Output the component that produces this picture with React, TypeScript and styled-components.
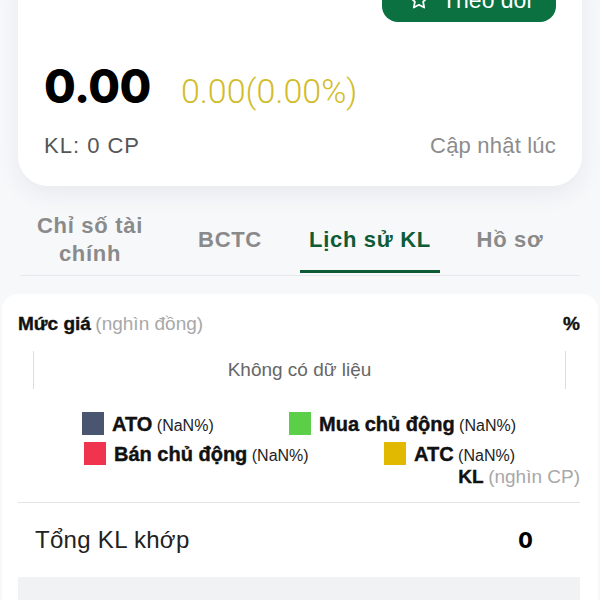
import styled, { createGlobalStyle } from 'styled-components'

const GlobalStyle = createGlobalStyle`
  html, body {
    margin: 0;
    padding: 0;
    background: #f7f8fa;
    font-family: "Liberation Sans", Arial, sans-serif;
    overflow: hidden;
  }
`;

const Page = styled.div`
  width: 600px;
  height: 600px;
  overflow: hidden;
`;

const QuoteCard = styled.section`
  margin: -30px 18px 0;
  padding: 8px 26px 29px;
  background: #fff;
  border-radius: 0 0 30px 30px;
  box-shadow: 0 8px 24px rgba(30, 40, 70, 0.07);
`;

const CardTop = styled.div`
  display: flex;
  justify-content: flex-end;
`;

const FollowButton = styled.button`
  display: flex;
  align-items: center;
  gap: 12px;
  width: 174px;
  height: 44px;
  padding: 0 0 0 26px;
  border: none;
  border-radius: 16px;
  background: #0b7141;
  color: #fff;
  font-family: "Liberation Sans", Arial, sans-serif;
  font-size: 23px;
`;

const PriceRow = styled.div`
  display: flex;
  align-items: baseline;
  gap: 30px;
  margin-top: 41px;
  line-height: 1;
`;

const Price = styled.span`
  font-family: Inter, sans-serif;
  font-weight: 800;
  font-size: 46px;
  letter-spacing: -0.5px;
  color: #000;
`;

const Change = styled.span`
  font-family: Roboto, sans-serif;
  font-size: 34px;
  font-weight: 300;
  color: #d2bc2c;
`;

const MetaRow = styled.div`
  display: flex;
  justify-content: space-between;
  margin-top: 26px;
  font-size: 22px;
  line-height: 1;
`;

const Meta = styled.span<{ $muted?: boolean }>`
  color: ${p => (p.$muted ? '#8c8c8c' : '#555')};
  letter-spacing: ${p => (p.$muted ? '0.2px' : '1px')};
`;

const Tabs = styled.nav`
  display: grid;
  grid-template-columns: repeat(4, 1fr);
  margin: 24px 20px 0;
  border-bottom: 1px solid #e6e7ea;
`;

const Tab = styled.div<{ $active?: boolean }>`
  display: flex;
  align-items: center;
  justify-content: center;
  height: 63px;
  box-sizing: border-box;
  text-align: center;
  font-size: 22px;
  font-weight: 700;
  letter-spacing: 0.7px;
  line-height: 28px;
  color: ${p => (p.$active ? '#0d5c36' : '#8a8a8a')};
  border-bottom: 3px solid ${p => (p.$active ? '#0d5c36' : 'transparent')};
  margin-bottom: 2px;
`;

const ChartCard = styled.section`
  margin: 18px 2px 0;
  padding: 18px 18px 0 16px;
  background: #fff;
  border-radius: 16px;
`;

const AxisRow = styled.div`
  display: flex;
  justify-content: space-between;
  align-items: baseline;
  line-height: 24px;
`;

const Strong = styled.b<{ $size?: number }>`
  font-weight: 700;
  font-size: ${p => p.$size ?? 19}px;
  color: #111;
  -webkit-text-stroke: 0.4px #111;
`;

const Unit = styled.span`
  font-size: 19px;
  color: #a8a8a8;
`;

const EmptyBox = styled.div`
  margin: 14px 14px 0 15px;
  height: 38px;
  display: flex;
  align-items: center;
  justify-content: center;
  border-left: 1px solid #dcdcdc;
  border-right: 1px solid #dcdcdc;
  font-size: 19px;
  color: #666;
`;

const Legend = styled.div`
  width: 434px;
  margin: 23px auto 0;
  display: flex;
  flex-direction: column;
  gap: 7px;
`;

const LegendRow = styled.div<{ $left?: number; $right?: number }>`
  display: flex;
  justify-content: space-between;
  padding: 0 ${p => p.$right ?? 0}px 0 ${p => p.$left ?? 0}px;
`;

const LegendItem = styled.div`
  display: flex;
  align-items: center;
  gap: 8px;
  height: 23px;
`;

const LegendLabel = styled.span`
  font-size: 16px;
  line-height: 1;
  white-space: nowrap;
  color: #222;
`;

const Swatch = styled.span<{ $color: string }>`
  width: 22px;
  height: 23px;
  background: ${p => p.$color};
`;

const VolumeUnit = styled.div`
  text-align: right;
  line-height: 22px;
  margin-top: 1px;
`;

const Divider = styled.hr`
  border: none;
  border-top: 1px solid #e3e4e6;
  margin: 13px 0 0;
`;

const TotalRow = styled.div`
  display: flex;
  justify-content: space-between;
  align-items: center;
  height: 74px;
  padding: 0 47px 0 17px;
  font-size: 24px;
  letter-spacing: 0.3px;
  color: #222;
`;

const TotalValue = styled.span`
  font-family: Inter, sans-serif;
  font-weight: 800;
  font-size: 21px;
  color: #000;
`;

const FooterBar = styled.div`
  height: 40px;
  background: #f1f2f4;
`;

const StarIcon = () => (
  <svg width="22" height="22" viewBox="0 0 24 24" fill="none" stroke="#fff" strokeWidth="1.9" strokeLinejoin="round">
    <path d="M12 2.8l2.8 5.9 6.4.8-4.7 4.4 1.2 6.4L12 17.2l-5.7 3.1 1.2-6.4-4.7-4.4 6.4-.8z" />
  </svg>
);

const legendRows = [
  [
    { color: '#4a5670', label: 'ATO' },
    { color: '#5bcf48', label: 'Mua chủ động' },
  ],
  [
    { color: '#f0344f', label: 'Bán chủ động' },
    { color: '#e0b900', label: 'ATC' },
  ],
];

const App = () => {
  return (
    <Page>
      <GlobalStyle />
      <QuoteCard>
        <CardTop>
          <FollowButton>
            <StarIcon />
            Theo dõi
          </FollowButton>
        </CardTop>
        <PriceRow>
          <Price>0.00</Price>
          <Change>0.00(0.00%)</Change>
        </PriceRow>
        <MetaRow>
          <Meta>KL: 0 CP</Meta>
          <Meta $muted>Cập nhật lúc</Meta>
        </MetaRow>
      </QuoteCard>

      <Tabs>
        <Tab>Chỉ số tài<br />chính</Tab>
        <Tab>BCTC</Tab>
        <Tab $active>Lịch sử KL</Tab>
        <Tab>Hồ sơ</Tab>
      </Tabs>

      <ChartCard>
        <AxisRow>
          <span>
            <Strong>Mức giá</Strong> <Unit>(nghìn đồng)</Unit>
          </span>
          <Strong>%</Strong>
        </AxisRow>
        <EmptyBox>Không có dữ liệu</EmptyBox>
        <Legend>
          {legendRows.map((row, i) => (
            <LegendRow key={i} $left={i ? 2 : 0} $right={i ? 1 : 0}>
              {row.map(item => (
                <LegendItem key={item.label}>
                  <Swatch $color={item.color} />
                  <LegendLabel>
                    <Strong $size={20}>{item.label}</Strong> (NaN%)
                  </LegendLabel>
                </LegendItem>
              ))}
            </LegendRow>
          ))}
        </Legend>
        <VolumeUnit>
          <Strong>KL</Strong> <Unit>(nghìn CP)</Unit>
        </VolumeUnit>
        <Divider />
        <TotalRow>
          <span>Tổng KL khớp</span>
          <TotalValue>0</TotalValue>
        </TotalRow>
        <FooterBar />
      </ChartCard>
    </Page>
  );
};

export default App;
